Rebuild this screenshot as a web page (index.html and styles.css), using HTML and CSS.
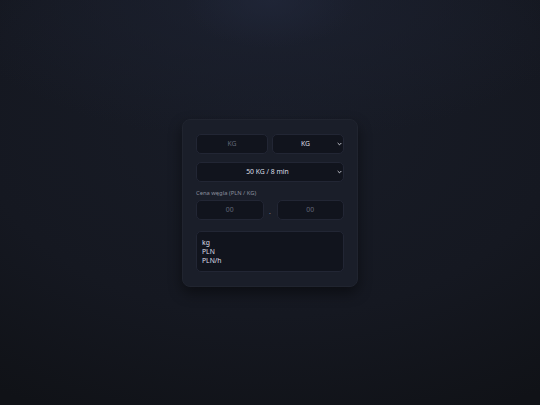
FILE: index.html
```html
<!DOCTYPE html>
<html lang="pl">
<head>
<meta charset="utf-8">
<title>Kalkulator</title>
<link rel="stylesheet" href="styles.css">
</head>
<body>
<main class="card">
  <div class="row two">
    <input class="field" type="text" placeholder="KG">
    <div class="selwrap">
      <select class="field sel">
        <option>KG</option>
      </select>
      <svg class="chev" viewBox="0 0 6 4" width="5" height="4"><path d="M0.8 0.8 L3 3 L5.2 0.8" fill="none" stroke="#d6d9e0" stroke-width="1.1"/></svg>
    </div>
  </div>
  <div class="selwrap wide">
    <select class="field sel">
      <option>50 KG / 8 min</option>
    </select>
    <svg class="chev" viewBox="0 0 6 4" width="5" height="4"><path d="M0.8 0.8 L3 3 L5.2 0.8" fill="none" stroke="#d6d9e0" stroke-width="1.1"/></svg>
  </div>
  <label class="label">Cena węgla (PLN / KG)</label>
  <div class="row price">
    <input class="field" type="text" placeholder="00">
    <span class="dot">.</span>
    <input class="field" type="text" placeholder="00">
  </div>
  <div class="output">kg<br>PLN<br>PLN/h</div>
</main>
</body>
</html>
```
FILE: styles.css
```css
html, body {
  margin: 0;
  height: 100%;
}
body {
  font-family: "Noto Sans", "Open Sans", sans-serif;
  background:
    radial-gradient(ellipse 16% 12% at 50% 0%, rgba(32,38,56,0.8), rgba(32,38,56,0) 100%),
    radial-gradient(ellipse 60% 35% at 50% 0%, rgba(28,33,48,0.9), rgba(28,33,48,0) 100%),
    radial-gradient(ellipse 90% 80% at 50% 30%, #181c27 0%, #151821 60%, #101217 100%);
  background-color: #13161e;
  display: flex;
  align-items: center;
  justify-content: center;
  color: #d6d9e0;
}
.card {
  box-sizing: border-box;
  width: 176px;
  padding: 14px 13px 14px;
  background: #1a1e29;
  border: 1px solid #20242f;
  border-radius: 8px;
  box-shadow: 0 6px 14px rgba(0,0,0,0.45);
  display: flex;
  flex-direction: column;
}
.row {
  display: grid;
  align-items: center;
}
.two {
  grid-template-columns: 1fr 1fr;
  gap: 4px;
}
.price {
  grid-template-columns: 1fr auto 1fr;
  gap: 4px;
}
.field {
  display: block;
  box-sizing: border-box;
  width: 100%;
  min-width: 0;
  height: 20px;
  margin: 0;
  background: #11141d;
  border: 1px solid #222634;
  border-radius: 5px;
  color: #dcdfe6;
  font-family: inherit;
  font-size: 6.8px;
  text-align: center;
  outline: none;
  padding: 0 4px;
}
.field::placeholder {
  color: #60657560;
  color: #626778;
}
.selwrap {
  position: relative;
  height: 20px;
}
.sel {
  appearance: none;
  -webkit-appearance: none;
  text-align-last: center;
  text-align: center;
  padding: 0 8px 0 3px;
}
.chev {
  position: absolute;
  right: 2px;
  top: 8px;
  display: block;
  pointer-events: none;
}
.wide {
  margin-top: 8px;
}
.label {
  margin-top: 7px;
  margin-bottom: 2px;
  font-size: 5.8px;
  line-height: 9px;
  color: #8a8f9c;
}
.dot {
  font-size: 7px;
  color: #7a7f8c;
  width: 5px;
  text-align: center;
  padding-top: 3px;
}
.output {
  box-sizing: border-box;
  margin-top: 11px;
  height: 41px;
  padding: 6px 5px;
  background: #11141d;
  border: 1px solid #222634;
  border-radius: 5px;
  font-size: 6.8px;
  line-height: 9.2px;
  color: #dcdfe6;
}
```
